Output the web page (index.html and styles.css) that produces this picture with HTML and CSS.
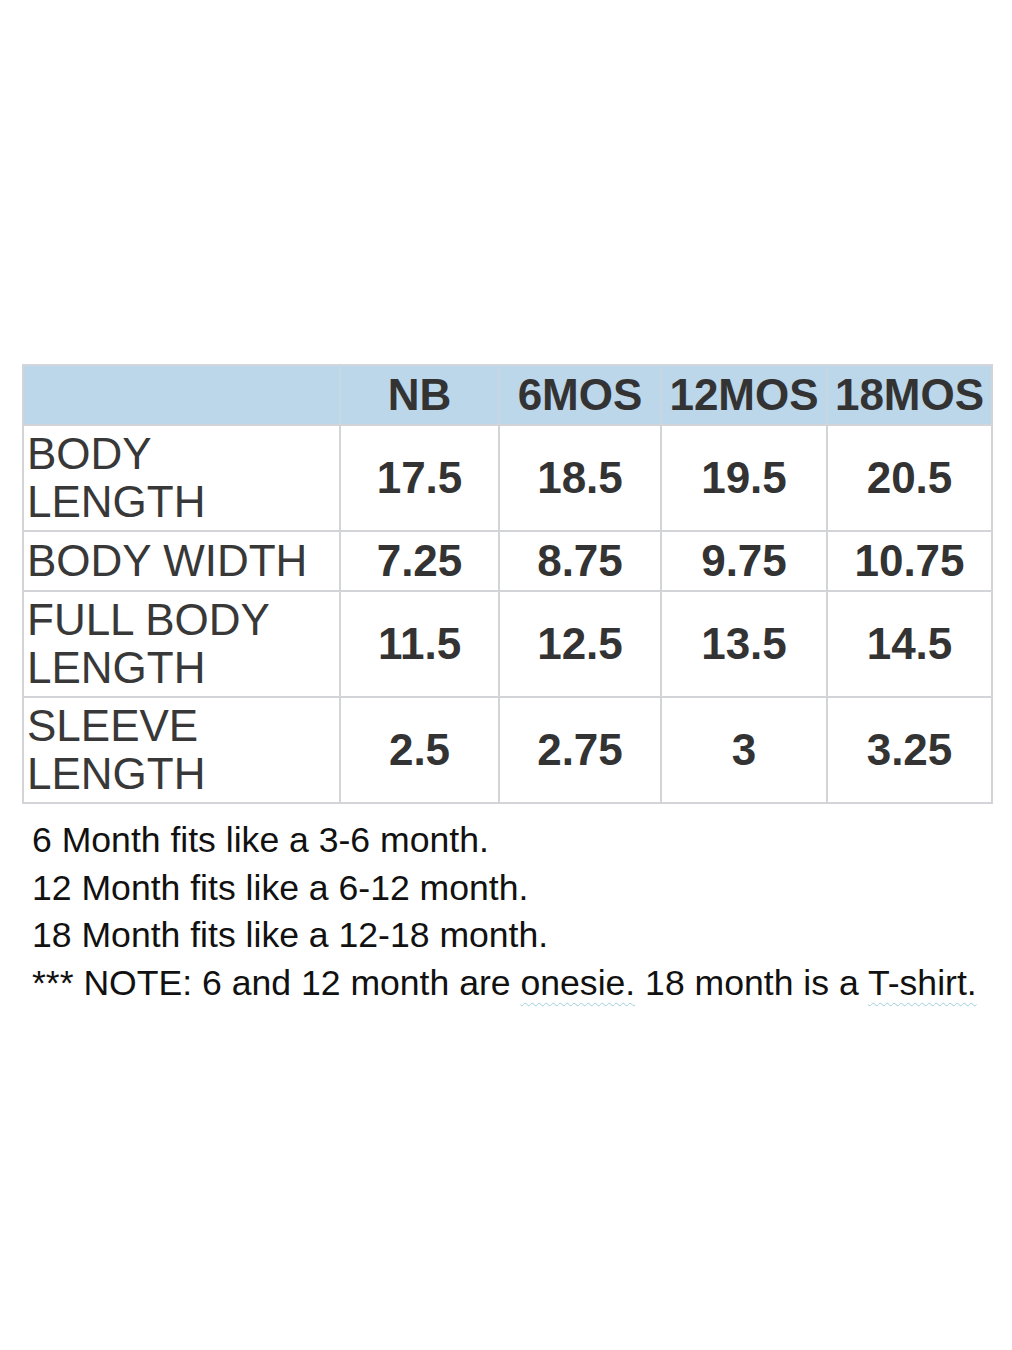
FILE: index.html
```html
<!DOCTYPE html>
<html lang="en">
<head>
<meta charset="utf-8">
<title>Size Chart</title>
<link rel="stylesheet" href="styles.css">
</head>
<body>
<main class="page">
  <table class="chart">
    <colgroup>
      <col class="c-label">
      <col class="c-nb">
      <col class="c-6">
      <col class="c-12">
      <col class="c-18">
    </colgroup>
    <thead>
      <tr class="head-row">
        <th class="blank"></th>
        <th>NB</th>
        <th>6MOS</th>
        <th>12MOS</th>
        <th>18MOS</th>
      </tr>
    </thead>
    <tbody>
      <tr class="tall">
        <td class="label">BODY<br>LENGTH</td>
        <td class="num">17.5</td>
        <td class="num">18.5</td>
        <td class="num">19.5</td>
        <td class="num">20.5</td>
      </tr>
      <tr class="short">
        <td class="label">BODY WIDTH</td>
        <td class="num">7.25</td>
        <td class="num">8.75</td>
        <td class="num">9.75</td>
        <td class="num">10.75</td>
      </tr>
      <tr class="tall">
        <td class="label">FULL BODY<br>LENGTH</td>
        <td class="num">11.5</td>
        <td class="num">12.5</td>
        <td class="num">13.5</td>
        <td class="num">14.5</td>
      </tr>
      <tr class="tall">
        <td class="label">SLEEVE<br>LENGTH</td>
        <td class="num">2.5</td>
        <td class="num">2.75</td>
        <td class="num">3</td>
        <td class="num">3.25</td>
      </tr>
    </tbody>
  </table>
  <div class="notes">
    <p>6 Month fits like a 3-6 month.</p>
    <p>12 Month fits like a 6-12 month.</p>
    <p>18 Month fits like a 12-18 month.</p>
    <p>*** NOTE: 6 and 12 month are <span class="squiggle">onesie.</span> 18 month is a <span class="squiggle">T-shirt.</span></p>
  </div>
</main>
</body>
</html>
```
FILE: styles.css
```css
html, body {
  margin: 0;
  padding: 0;
  background: #ffffff;
}

.page {
  padding: 364px 0 0 22px;
  font-family: "Liberation Sans", Arial, sans-serif;
  color: #333333;
}

.chart {
  border-collapse: collapse;
  table-layout: fixed;
  width: 971px;
}

.c-label { width: 317px; }
.c-nb { width: 159px; }
.c-6 { width: 162px; }
.c-12 { width: 166px; }
.c-18 { width: 165px; }

.chart th,
.chart td {
  border: 2px solid #d3d4d8;
  padding: 0;
}

.head-row {
  height: 60px;
}

.chart .head-row th {
  background: #bcd6ea;
  border-left-color: #c9d7e3;
  border-right-color: #c9d7e3;
  border-top-color: #d3d6da;
  border-bottom-color: #d3d4d8;
  font-size: 44px;
  font-weight: bold;
  text-align: center;
  vertical-align: middle;
  line-height: 48px;
  color: #333333;
  white-space: nowrap;
}

.chart .head-row th:first-child {
  border-left-color: #d3d4d8;
}

.chart .head-row th:last-child {
  border-right-color: #d3d4d8;
}

.tall { height: 106px; }
.short { height: 60px; }

.chart .label {
  font-size: 44px;
  line-height: 48px;
  padding-left: 3px;
  text-align: left;
  vertical-align: middle;
  color: #383838;
  white-space: nowrap;
}

.chart .num {
  font-size: 44px;
  font-weight: bold;
  text-align: center;
  vertical-align: middle;
  color: #333333;
}

.notes {
  padding: 13px 0 0 10px;
  color: #111111;
  font-size: 35.6px;
  line-height: 47.7px;
}

.notes p {
  margin: 0;
  white-space: nowrap;
}

.squiggle {
  text-decoration: underline wavy #9fd0dd 1px;
  text-underline-offset: 7px;
}
```
